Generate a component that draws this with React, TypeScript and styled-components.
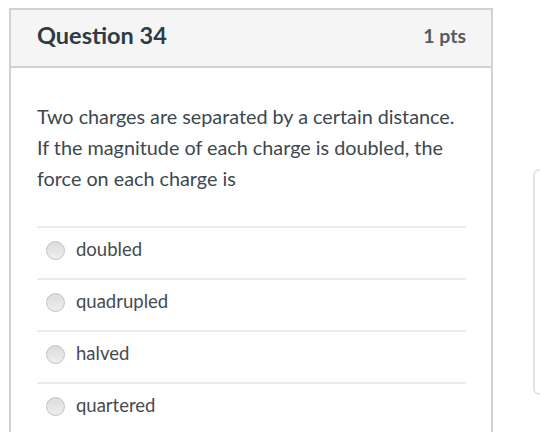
import React from 'react';
import styled, { createGlobalStyle } from 'styled-components';

const answers = ['doubled', 'quadrupled', 'halved', 'quartered'];

export default function App() {
    return (
        <>
            <GlobalStyle />
            <Page>
                <QuestionCard>
                    <CardHeader>
                        <Title>Question 34</Title>
                        <Points>1 pts</Points>
                    </CardHeader>
                    <CardBody>
                        <QuestionText>
                            Two charges are separated by a certain distance.
                            If the magnitude of each charge is doubled, the
                            force on each charge is
                        </QuestionText>
                        <AnswerList>
                            {answers.map((a) => (
                                <AnswerRow key={a}>
                                    <Radio />
                                    <AnswerLabel>{a}</AnswerLabel>
                                </AnswerRow>
                            ))}
                        </AnswerList>
                    </CardBody>
                </QuestionCard>
                <SidePanel />
            </Page>
        </>
    );
}

// Styles ------------

const GlobalStyle = createGlobalStyle`
    html, body {
        margin: 0;
        padding: 0;
        background: #ffffff;
        overflow: hidden;
    }
    body {
        font-family: Lato, 'Open Sans', sans-serif;
        color: #2d3b45;
    }
`;

const Page = styled.div`
    display: flex;
    align-items: flex-start;
    padding: 8px 0 0 9px;
    height: 432px;
    box-sizing: border-box;
    overflow: hidden;
`;

const QuestionCard = styled.div`
    width: 484px;
    flex-shrink: 0;
    border: 2px solid #cfd3d6;
    border-bottom: none;
    height: 440px;
    box-sizing: border-box;
`;

const CardHeader = styled.div`
    display: flex;
    justify-content: space-between;
    align-items: center;
    height: 56px;
    padding: 0 25px 0 26px;
    background: #f5f5f5;
    border-bottom: 2px solid #cfd3d6;
`;

const Title = styled.div`
    font-size: 23.5px;
    font-weight: 700;
    color: #2d3b45;
    margin-bottom: 6px;
`;

const Points = styled.div`
    font-size: 19.5px;
    font-weight: 700;
    color: #555c61;
    margin-bottom: 6px;
`;

const CardBody = styled.div`
    padding: 33px 25px 0 26px;
`;

const QuestionText = styled.div`
    font-size: 19.8px;
    line-height: 31px;
    color: #3c4850;
`;

const AnswerList = styled.div`
    margin-top: 32px;
`;

const AnswerRow = styled.div`
    display: flex;
    align-items: center;
    height: 48px;
    padding: 0 0 2px 9px;
    border-top: 2px solid #ebebeb;
`;

const Radio = styled.span`
    width: 19px;
    height: 19px;
    border-radius: 50%;
    box-sizing: border-box;
    border: 1px solid #c2c2c2;
    background: linear-gradient(#dcdcdc, #eeeeee);
    margin-right: 11px;
    margin-bottom: 4px;
`;

const AnswerLabel = styled.span`
    font-size: 18.5px;
    color: #444b50;
    margin-bottom: 6px;
`;

const SidePanel = styled.div`
    margin-left: 40px;
    margin-top: 161px;
    width: 60px;
    height: 226px;
    flex-shrink: 0;
    border: 2px solid #e3e3e3;
    border-radius: 6px;
    box-sizing: border-box;
`;
